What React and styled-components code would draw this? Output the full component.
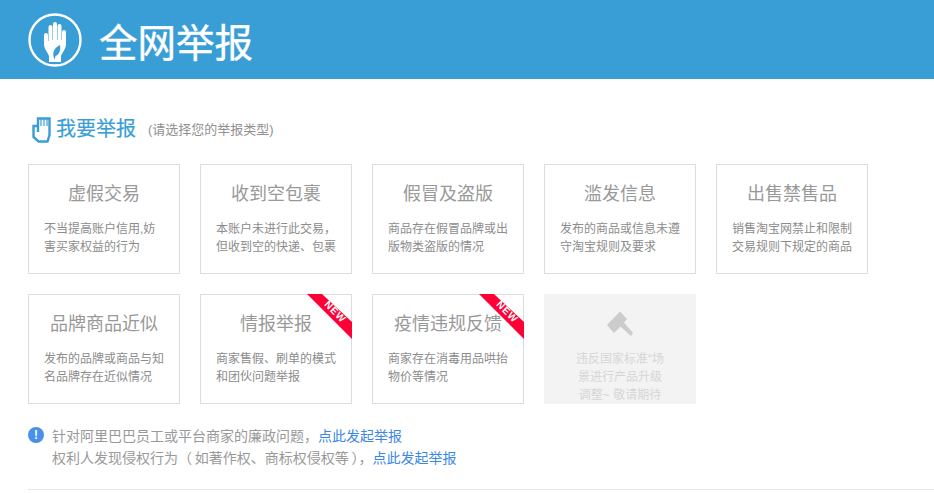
import React from 'react'
import styled, { createGlobalStyle } from 'styled-components'

const GlobalStyle = createGlobalStyle`
  html, body {
    margin: 0;
    padding: 0;
    background: #fff;
    font-family: "Liberation Sans", "Noto Sans CJK SC", sans-serif;
  }
  * { box-sizing: border-box; }
`

const Page = styled.div`
  width: 934px;
  height: 493px;
  overflow: hidden;
`

const Banner = styled.header`
  height: 79px;
  background: #3a9ed6;
  display: flex;
  align-items: center;
  gap: 17px;
  padding-left: 28px;
`

const BannerTitle = styled.h1`
  margin: 0;
  font-size: 38.5px;
  font-weight: 400;
  color: #fff;
  -webkit-text-stroke: 0.4px #fff;
`

const Content = styled.main`
  padding: 33px 0 0 28px;
`

const SectionHead = styled.div`
  display: flex;
  align-items: center;
  height: 30px;
  margin-bottom: 22px;
`

const SectionIcon = styled.svg`
  margin: 6px 0 0 4px;
`

const SectionTitle = styled.h2`
  margin: 0 12px 0 5px;
  font-size: 20px;
  font-weight: 400;
  color: #3a9ed6;
  -webkit-text-stroke: 0.2px #3a9ed6;
`

const Hint = styled.span`
  font-size: 13px;
  color: #919191;
  margin-top: 3px;
`

const Grid = styled.div`
  display: grid;
  grid-template-columns: repeat(5, 152px);
  grid-auto-rows: 110px;
  gap: 20px;
`

const Card = styled.div`
  position: relative;
  border: 1px solid #ddd;
  padding: 16px 15px 0;
`

const CardTitle = styled.h3`
  margin: 0 0 13px;
  font-size: 18px;
  font-weight: 400;
  line-height: 26px;
  color: #999;
  text-align: center;
  white-space: nowrap;
`

const CardText = styled.p`
  margin: 0;
  font-size: 12px;
  line-height: 18px;
  color: #8c8c8c;
  white-space: pre;
`

const Ribbon = styled.div`
  position: absolute;
  top: -1px;
  right: -1px;
  width: 45px;
  height: 45px;
  background: #ff0036;
  clip-path: polygon(0 0, 15px 0, 100% 28px, 100% 100%);
`

const RibbonText = styled.span`
  position: absolute;
  top: 11px;
  right: -6px;
  width: 44px;
  font-size: 10px;
  font-weight: 700;
  letter-spacing: 0.8px;
  line-height: 12px;
  text-align: center;
  color: #fff;
  transform: rotate(45deg);
`

const ClosedCard = styled.div`
  background: #f3f3f3;
  padding-top: 14px;
  overflow: hidden;
  text-align: center;
`

const ClosedIcon = styled.svg`
  display: block;
  width: 30px;
  height: 30px;
  margin: 0 auto 12px;
`

const ClosedText = styled.p`
  margin: 0;
  font-size: 12px;
  line-height: 18px;
  color: #d6d6d6;
  white-space: pre;
`

const Notice = styled.div`
  display: flex;
  gap: 8px;
  margin-top: 21px;
  padding-bottom: 20px;
  border-bottom: 1px solid #e8e8e8;
`

const NoticeIcon = styled.span`
  flex: none;
  width: 16px;
  height: 16px;
  margin-top: 2px;
  border-radius: 50%;
  background: #4a8fe8;
  color: #fff;
  font-size: 12px;
  font-weight: 700;
  line-height: 16px;
  text-align: center;
`

const NoticeText = styled.div`
  font-size: 14px;
  line-height: 22px;
  color: #999;
`

const NoticeLink = styled.a`
  color: #3b87e6;
  text-decoration: none;
`

const cards = [
  { title: '虚假交易', text: '不当提高账户信用,妨\n害买家权益的行为' },
  { title: '收到空包裹', text: '本账户未进行此交易，\n但收到空的快递、包裹' },
  { title: '假冒及盗版', text: '商品存在假冒品牌或出\n版物类盗版的情况' },
  { title: '滥发信息', text: '发布的商品或信息未遵\n守淘宝规则及要求' },
  { title: '出售禁售品', text: '销售淘宝网禁止和限制\n交易规则下规定的商品' },
  { title: '品牌商品近似', text: '发布的品牌或商品与知\n名品牌存在近似情况' },
  { title: '情报举报', text: '商家售假、刷单的模式\n和团伙问题举报', isNew: true },
  { title: '疫情违规反馈', text: '商家存在消毒用品哄抬\n物价等情况', isNew: true },
]

function Logo() {
  return (
    <svg width="54" height="54" viewBox="0 0 54 54">
      <circle cx="27" cy="27" r="25.5" fill="none" stroke="#fff" strokeWidth="2.4" />
      <path
        fill="#fff"
        d="M16 22a2 2 0 0 1 4 0V28h.5V14a2 2 0 0 1 4 0V27h.5V11a2 2 0 0 1 4 0V27h.5V13a2 2 0 0 1 4 0V27h.5V19a2 2 0 0 1 4 0V31C38 37 33 40 33 44V49H21V44C21 40 16 37 16 31Z"
      />
      <path fill="#3a9ed6" d="M26 45C24 40 26 35 32 32C33 37 31 42 27.500 43L26.500 47Z" />
    </svg>
  )
}

function HandIcon() {
  return (
    <SectionIcon width="19" height="26" viewBox="0 0 19 26" fill="none" stroke="#3a9ed6">
      <path strokeWidth="2.400" d="M6 15V1.500H17.500V18L15.500 24.500H6.500L1.500 20V9H6" />
      <path strokeWidth="1.200" d="M9 2V9M12 2V9M15 2V9" />
    </SectionIcon>
  )
}

function App() {
  return (
    <Page>
      <GlobalStyle />
      <Banner>
        <Logo />
        <BannerTitle>全网举报</BannerTitle>
      </Banner>
      <Content>
        <SectionHead>
          <HandIcon />
          <SectionTitle>我要举报</SectionTitle>
          <Hint>(请选择您的举报类型)</Hint>
        </SectionHead>
        <Grid>
          {cards.map(card => (
            <Card key={card.title}>
              {card.isNew && (
                <>
                  <Ribbon />
                  <RibbonText>NEW</RibbonText>
                </>
              )}
              <CardTitle>{card.title}</CardTitle>
              <CardText>{card.text}</CardText>
            </Card>
          ))}
          <ClosedCard>
            <ClosedIcon viewBox="0 0 30 30">
              <path fill="#ccc" d="M2 17 15 3.500 22 11 19 14.500 28 25 26 28 15.500 18.500 9 25Z" />
            </ClosedIcon>
            <ClosedText>{'违反国家标准“场\n景进行产品升级\n调整~ 敬请期待'}</ClosedText>
          </ClosedCard>
        </Grid>
        <Notice>
          <NoticeIcon>!</NoticeIcon>
          <NoticeText>
            针对阿里巴巴员工或平台商家的廉政问题，<NoticeLink href="#">点此发起举报</NoticeLink>
            <br />
            {'权利人发现侵权行为（\u2009如著作权、商标权侵权等\u2009），'}<NoticeLink href="#">点此发起举报</NoticeLink>
          </NoticeText>
        </Notice>
      </Content>
    </Page>
  )
}

export default App
